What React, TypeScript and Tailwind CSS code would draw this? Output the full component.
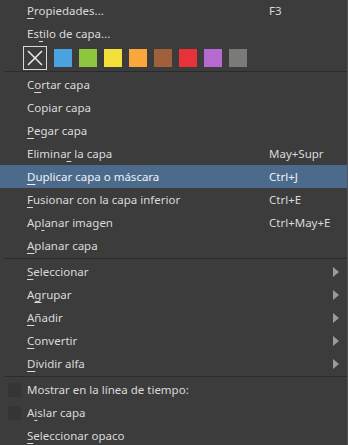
import React from 'react'

type Item = {
  label: string
  key?: number
  shortcut?: string
  sub?: boolean
  active?: boolean
  check?: boolean
}

const swatches = ['#4aa3df', '#8dc63f', '#f5e03a', '#f9a63a', '#a0603a', '#e8323a', '#b66ad0', '#7a7a78']

function Label({ text, k }: { text: string; k?: number }) {
  if (k === undefined) return <span>{text}</span>
  return (
    <span>
      {text.slice(0, k)}
      <span className="underline decoration-1 underline-offset-[3px]">{text[k]}</span>
      {text.slice(k + 1)}
    </span>
  )
}

function Row({ item, h = 'h-[23px]' }: { item: Item; h?: string }) {
  return (
    <div
      className={
        'flex items-center pl-[27px] pr-[4px] ' +
        h +
        ' ' +
        (item.active ? 'bg-[#4c6b8c] text-[#eef2f6]' : 'text-[#dadada]')
      }
    >
      {item.check !== undefined && (
        <div className="-ml-[19px] mr-[6px] h-[14px] w-[13px] bg-[#353535]" />
      )}
      <div className="flex-1 whitespace-nowrap">
        <Label text={item.label} k={item.key} />
      </div>
      {item.shortcut && <div className="w-[74px] whitespace-nowrap">{item.shortcut}</div>}
      {item.sub && (
        <svg width="6" height="10" viewBox="0 0 6 10" className="mr-[4px]">
          <path d="M0 0L6 5L0 10Z" fill="#9a9a9a" />
        </svg>
      )}
    </div>
  )
}

function Sep() {
  return (
    <div className="flex h-[3px] items-center pl-[4px]">
      <div className="h-px w-full bg-[#2b2b2b]" />
    </div>
  )
}

export default function App() {
  const edit: Item[] = [
    { label: 'Cortar capa', key: 1 },
    { label: 'Copiar capa' },
    { label: 'Pegar capa', key: 0 },
    { label: 'Eliminar la capa', key: 7, shortcut: 'May+Supr' },
    { label: 'Duplicar capa o máscara', key: 0, shortcut: 'Ctrl+J', active: true },
    { label: 'Fusionar con la capa inferior', key: 0, shortcut: 'Ctrl+E' },
    { label: 'Aplanar imagen', key: 2, shortcut: 'Ctrl+May+E' },
    { label: 'Aplanar capa', key: 0 },
  ]
  const subs: Item[] = [
    { label: 'Seleccionar', key: 0, sub: true },
    { label: 'Agrupar', key: 1, sub: true },
    { label: 'Añadir', key: 0, sub: true },
    { label: 'Convertir', key: 0, sub: true },
    { label: 'Dividir alfa', key: 0, sub: true },
  ]
  const last: Item[] = [
    { label: 'Mostrar en la línea de tiempo:', check: false },
    { label: 'Aislar capa', key: 1, check: false },
    { label: 'Seleccionar opaco', key: 0 },
  ]

  return (
    <div
      className="h-[445px] w-[348px] overflow-hidden border-r border-[#555555] bg-[#3c3c3c] text-[11.5px]"
      style={{ fontFamily: '"Noto Sans", "Open Sans", sans-serif' }}
    >
      <Row item={{ label: 'Propiedades...', key: 0, shortcut: 'F3' }} h="h-[22px]" />
      <Row item={{ label: 'Estilo de capa...', key: 2 }} />
      <div className="mt-px flex h-[24px] items-center gap-[7px] pl-[23px]">
        <div className="flex h-[24px] w-[24px] items-center justify-center border border-[#d8d8d8]">
          <svg width="18" height="18" viewBox="0 0 18 18">
            <path d="M2 2L16 16M16 2L2 16" stroke="#e6e6e6" strokeWidth="1.6" />
          </svg>
        </div>
        {swatches.map((c) => (
          <div key={c} className="h-[18px] w-[18px]" style={{ backgroundColor: c }} />
        ))}
      </div>
      <Sep />
      {edit.map((it) => (
        <Row key={it.label} item={it} />
      ))}
      <Sep />
      {subs.map((it) => (
        <Row key={it.label} item={it} />
      ))}
      <Sep />
      {last.map((it) => (
        <Row key={it.label} item={it} />
      ))}
    </div>
  )
}
